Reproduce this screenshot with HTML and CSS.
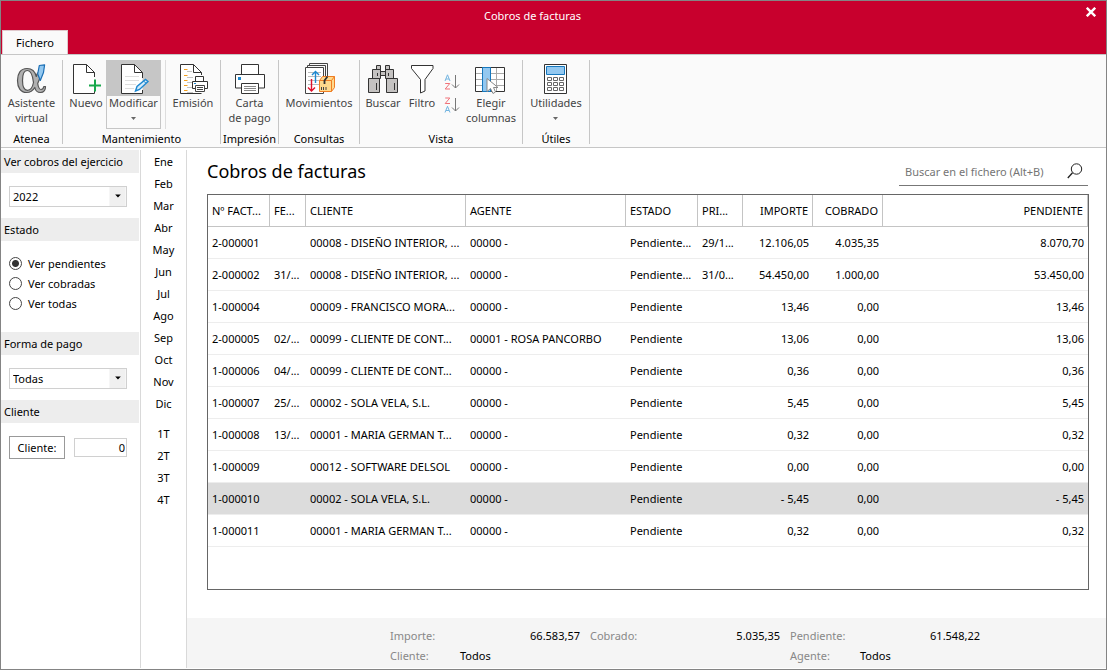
FILE: index.html
```html
<!DOCTYPE html>
<html lang="es">
<head>
<meta charset="utf-8">
<title>Cobros de facturas</title>
<link rel="stylesheet" href="styles.css">
</head>
<body>
<div class="window">
  <header class="titlebar">
    <button class="tab" type="button">Fichero</button>
    <div class="caption">Cobros de facturas</div>
    <button class="close" type="button" aria-label="Cerrar"><svg width="10" height="10" viewBox="0 0 10 10" fill="none" stroke="#fff" stroke-width="2.4"><path d="M.8.8l8.4 8.4M9.2.8L.8 9.2"/></svg></button>
  </header>

  <nav class="ribbon">
    <section class="group">
      <div class="tools">
        <button class="tool" type="button">
          <svg width="32" height="32" viewBox="0 0 32 32" fill="none" stroke-linejoin="round"><path fill-rule="evenodd" d="M11 5.500C4.500 5.500 1.500 10.500 1.500 17.500S4.500 29.500 10.500 29.500C14.500 29.500 17 27.500 18.800 24.500C19.500 28 21.500 29.500 24.500 29.500C27.500 29.500 29.500 27.500 29.500 23.500H27.800C27.500 25.500 26.500 26.500 25 26.500C23 26.500 22.300 24.500 21.700 20.500C23.500 17 24.500 13.500 25 10H21.500L20.300 13.500C19 8 16 5.500 11 5.500ZM11.500 7.500C14.500 7.500 16.500 11.500 17.500 19.500C16.500 24.500 14.500 27.300 11.500 27.300C8 27.300 6.500 23.500 6.500 17.500S8 7.500 11.500 7.500Z" fill="#b0b0b0" stroke="#555" stroke-width="1.200"/><path d="M23.300 2.500L28.600 1.800 27.500 9.500 24.300 17.500 21.700 11z" fill="#93c8f0" stroke="#1c6fb5" stroke-width="1.200"/></svg>
          <span>Asistente<br>virtual</span>
        </button>
      </div>
      <h2 class="group-name">Atenea</h2>
    </section>

    <section class="group">
      <div class="tools">
        <button class="tool tool-new" type="button">
          <svg width="32" height="32" viewBox="0 0 32 32" fill="none"><path d="M24.500 14V9.500L16.500 1.500H3.500v29h21V27" stroke="#333" fill="#fff"/><path d="M16.500 1.500v8h8" stroke="#333"/><path d="M19 22.500h12M25 16.500v12" stroke="#17a84b" stroke-width="2"/></svg>
          <span>Nuevo</span>
        </button>
        <button class="tool tool-active" type="button">
          <svg width="32" height="32" viewBox="0 0 32 32" fill="none"><path d="M24.500 15V9.500l-8-8H3.500v29h21V27" stroke="#333" fill="#fff"/><path d="M16.500 1.500v8h8" stroke="#333"/><path d="M7 13.500h14M7 17.500h14M7 21.500h11M7 25.500h9" stroke="#ddd"/><path d="M17.500 28l1.500-4.500L27.500 16.500l2.500 2-8.500 8z" fill="#d5ecfb" stroke="#1e88d0" stroke-width="1.400"/><path d="M25.500 18l2.500 2.200" stroke="#1e88d0"/></svg>
          <span>Modificar</span>
          <svg class="more" width="5" height="3" viewBox="0 0 5 3"><path d="M0 0h5L2.500 3z" fill="#666"/></svg>
        </button>
        <button class="tool tool-issue" type="button">
          <svg width="32" height="32" viewBox="0 0 32 32" fill="none"><path d="M24.500 12V9.500l-8-8H3.500v29H24.500" stroke="#333" fill="#fff"/><path d="M16.500 1.500v8h8" stroke="#333"/><path d="M7 6.500h3.500M7 12.500h3.500M7 17.500h3.500M7 22.500h3.500M7 27.500h3.500" stroke="#f5a01e" stroke-width="1.200"/><path d="M10 8.500h5M10 14.500h6M10 19.500h5M10 24.500h5M10 29.500h6" stroke="#c4c4c4"/><path d="M18.500 19v-5.500h8V19M15.500 18.500h15v7h-15z" stroke="#333" fill="#fff"/><path d="M18.500 22.500h9v6h-9zM20 24.500h6M20 26.500h6" stroke="#444" fill="#fff"/><path d="M17 20.500h2" stroke="#1e88d0"/></svg>
          <span>Emisión</span>
        </button>
      </div>
      <h2 class="group-name">Mantenimiento</h2>
    </section>

    <section class="group">
      <div class="tools">
        <button class="tool" type="button">
          <svg width="32" height="32" viewBox="0 0 32 32" fill="none" stroke="#333"><path d="M7.500 11V1.500h17V11M7.500 25h-6V11.500h29V25h-6" fill="#fff"/><path d="M7.500 20.500h17v10h-17z" fill="#fff"/><path d="M10 23.500h12M10 25.500h12M10 27.500h12" stroke="#888"/><path d="M4 14h3v3H4z" fill="#1e88d0" stroke="none"/></svg>
          <span>Carta<br>de pago</span>
        </button>
      </div>
      <h2 class="group-name">Impresión</h2>
    </section>

    <section class="group">
      <div class="tools">
        <button class="tool" type="button">
          <svg width="32" height="32" viewBox="0 0 32 32" fill="none"><path d="M6.500 3V.5h18V18M4.500 6V2.500h18V18" stroke="#444"/><path d="M2.500 4.500h18v26h-18z" fill="#fff" stroke="#444"/><path d="M5 9.500h13M5 13.500h13M5 17.500h11M5 21.500h11" stroke="#bbb"/><path d="M12.500 20V8.500M9 12l3.500-3.500L16 12" stroke="#1e88d0" stroke-width="1.400"/><path d="M8.500 16v12M5 24.500L8.500 28l3.500-3.500" stroke="#e1112c" stroke-width="1.400"/><path d="M16.500 17.500l3-4h12v11l-3 4h-12z" fill="#ffd98c" stroke="#ef7d23"/><path d="M16.500 17.500h12v11M28.500 17.500l3-4" stroke="#ef7d23"/><path d="M21.500 21v-3.500l3-4" stroke="#333" stroke-width="1.800"/><path d="M18.500 24v3M20.500 24v3M23 24v3" stroke="#444"/></svg>
          <span>Movimientos</span>
        </button>
      </div>
      <h2 class="group-name">Consultas</h2>
    </section>

    <section class="group">
      <div class="tools tools-view">
        <button class="tool tool-find" type="button">
          <svg width="32" height="32" viewBox="0 0 32 32" fill="#c4c2c1" stroke="#333"><path d="M9.500 2.500h4v4h-4zM18.500 2.500h4v4h-4zM13.500 8.500h5v4h-5zM5.500 6.500h8v9h-8zM18.500 6.500h8v9h-8zM1.500 15.500h11v14h-11zM19.500 15.500h11v14h-11z"/><path d="M10.500 10v3M21.500 10v3M9.500 20v7M27.500 20v7" fill="none"/></svg>
          <span>Buscar</span>
        </button>
        <button class="tool tool-filter" type="button">
          <svg width="32" height="32" viewBox="0 0 32 32" fill="#fff" stroke="#333"><path d="M5.500 2.500h21.500v3l-8 11v11.500l-4.500 2V16.500l-9-11z"/></svg>
          <span>Filtro</span>
        </button>
        <div class="sorts">
          <button class="sort" type="button" aria-label="Orden ascendente"><svg width="16" height="16" viewBox="0 0 16 16" fill="none"><path d="M1 7L3.500.8 6 7M2 5h3" stroke="#72b4e0"/><path d="M1.200 9.500h4.600L1.200 15h4.800" stroke="#f07178"/><path d="M11.500 1v13M8 10.500l3.500 3.500L15 10.500" stroke="#777"/></svg></button>
          <button class="sort" type="button" aria-label="Orden descendente"><svg width="16" height="16" viewBox="0 0 16 16" fill="none"><path d="M1.200 1h4.600L1.200 6.500h4.800" stroke="#f07178"/><path d="M1 15.500l2.500-6.200L6 15.500M2 13.500h3" stroke="#72b4e0"/><path d="M11.500 1v13M8 10.500l3.500 3.500L15 10.500" stroke="#777"/></svg></button>
        </div>
        <button class="tool tool-columns" type="button">
          <svg width="32" height="32" viewBox="0 0 32 32" fill="none"><path d="M.5 4.500h29v24h-29z" fill="#fff" stroke="#333"/><path d="M1 10.500h28M1 16.500h28M1 22.500h28M21.500 5v23" stroke="#aaa"/><path d="M7.500 4.500h8v24h-8z" fill="#93c8f0" stroke="#1678be"/><path d="M12 15.500v13l3.500-3 2.500 5 2.500-1.500-2-4.500h4.500z" fill="#fff" stroke="#888"/></svg>
          <span>Elegir<br>columnas</span>
        </button>
      </div>
      <h2 class="group-name">Vista</h2>
    </section>

    <section class="group">
      <div class="tools">
        <button class="tool" type="button">
          <svg width="32" height="32" viewBox="0 0 32 32" fill="none"><path d="M4.500 1.500h22v29h-22z" fill="#fff" stroke="#333"/><path d="M6.500 3.500h18v8h-18z" fill="#93c8f0" stroke="#1678be"/><path d="M7.500 14.500h4v3h-4zM13.500 14.500h4v3h-4zM19.500 14.500h4v3h-4zM7.500 19.500h4v3h-4zM13.500 19.500h4v3h-4zM19.500 19.500h4v3h-4zM7.500 24.500h4v3h-4zM13.500 24.500h4v3h-4zM19.500 24.500h4v3h-4z" stroke="#666"/></svg>
          <span>Utilidades</span>
          <svg class="more" width="5" height="3" viewBox="0 0 5 3"><path d="M0 0h5L2.500 3z" fill="#666"/></svg>
        </button>
      </div>
      <h2 class="group-name">Útiles</h2>
    </section>
  </nav>

  <div class="body">
    <aside class="filters">
      <h3><label for="year">Ver cobros del ejercicio</label></h3>
      <div class="panel">
        <div class="combo"><select id="year"><option>2022</option></select><svg width="17" height="20" viewBox="0 0 17 20"><path d="M0 0h17v20H0z" fill="#f0f0f0"/><path d="M6 8h6L9 11z"/></svg></div>
      </div>
      <h3>Estado</h3>
      <div class="panel radios">
        <label><input type="radio" name="state" checked>Ver pendientes</label>
        <label><input type="radio" name="state">Ver cobradas</label>
        <label><input type="radio" name="state">Ver todas</label>
      </div>
      <h3><label for="method">Forma de pago</label></h3>
      <div class="panel">
        <div class="combo"><select id="method"><option>Todas</option></select><svg width="17" height="20" viewBox="0 0 17 20"><path d="M0 0h17v20H0z" fill="#f0f0f0"/><path d="M6 8h6L9 11z"/></svg></div>
      </div>
      <h3>Cliente</h3>
      <div class="panel client">
        <button type="button">Cliente:</button>
        <input type="text" value="0" aria-label="Cliente">
      </div>
    </aside>

    <nav class="periods">
      <button type="button">Ene</button><button type="button">Feb</button><button type="button">Mar</button><button type="button">Abr</button><button type="button">May</button><button type="button">Jun</button><button type="button">Jul</button><button type="button">Ago</button><button type="button">Sep</button><button type="button">Oct</button><button type="button">Nov</button><button type="button">Dic</button>
      <button class="quarter" type="button">1T</button><button type="button">2T</button><button type="button">3T</button><button type="button">4T</button>
    </nav>

    <main class="content">
      <div class="heading">
        <h1>Cobros de facturas</h1>
        <div class="search">
          <input type="text" placeholder="Buscar en el fichero (Alt+B)" aria-label="Buscar en el fichero">
          <svg width="16" height="16" viewBox="0 0 16 16" fill="none" stroke="#222"><circle cx="9.500" cy="6" r="5.200"/><path d="M5.500 9.800L.8 15" stroke-width="1.300"/></svg>
        </div>
      </div>
      <div class="grid">
        <table>
          <colgroup><col class="c-number"><col class="c-date"><col class="c-name"><col class="c-name"><col class="c-state"><col class="c-first"><col class="c-sum"><col class="c-sum"><col></colgroup>
          <thead><tr><th>Nº FACT...</th><th>FE...</th><th>CLIENTE</th><th>AGENTE</th><th>ESTADO</th><th>PRI...</th><th class="num">IMPORTE</th><th class="num">COBRADO</th><th class="num">PENDIENTE</th></tr></thead>
          <tbody>
            <tr><td>2-000001</td><td></td><td>00008 - DISEÑO INTERIOR, ...</td><td>00000 -</td><td>Pendiente...</td><td>29/1...</td><td class="num">12.106,05</td><td class="num">4.035,35</td><td class="num">8.070,70</td></tr>
            <tr><td>2-000002</td><td>31/...</td><td>00008 - DISEÑO INTERIOR, ...</td><td>00000 -</td><td>Pendiente...</td><td>31/0...</td><td class="num">54.450,00</td><td class="num">1.000,00</td><td class="num">53.450,00</td></tr>
            <tr><td>1-000004</td><td></td><td>00009 - FRANCISCO MORA...</td><td>00000 -</td><td>Pendiente</td><td></td><td class="num">13,46</td><td class="num">0,00</td><td class="num">13,46</td></tr>
            <tr><td>2-000005</td><td>02/...</td><td>00099 - CLIENTE DE CONT...</td><td>00001 - ROSA PANCORBO</td><td>Pendiente</td><td></td><td class="num">13,06</td><td class="num">0,00</td><td class="num">13,06</td></tr>
            <tr><td>1-000006</td><td>04/...</td><td>00099 - CLIENTE DE CONT...</td><td>00000 -</td><td>Pendiente</td><td></td><td class="num">0,36</td><td class="num">0,00</td><td class="num">0,36</td></tr>
            <tr><td>1-000007</td><td>25/...</td><td>00002 - SOLA VELA, S.L.</td><td>00000 -</td><td>Pendiente</td><td></td><td class="num">5,45</td><td class="num">0,00</td><td class="num">5,45</td></tr>
            <tr><td>1-000008</td><td>13/...</td><td>00001 - MARIA GERMAN T...</td><td>00000 -</td><td>Pendiente</td><td></td><td class="num">0,32</td><td class="num">0,00</td><td class="num">0,32</td></tr>
            <tr><td>1-000009</td><td></td><td>00012 - SOFTWARE DELSOL</td><td>00000 -</td><td>Pendiente</td><td></td><td class="num">0,00</td><td class="num">0,00</td><td class="num">0,00</td></tr>
            <tr class="selected"><td>1-000010</td><td></td><td>00002 - SOLA VELA, S.L.</td><td>00000 -</td><td>Pendiente</td><td></td><td class="num">- 5,45</td><td class="num">0,00</td><td class="num">- 5,45</td></tr>
            <tr><td>1-000011</td><td></td><td>00001 - MARIA GERMAN T...</td><td>00000 -</td><td>Pendiente</td><td></td><td class="num">0,32</td><td class="num">0,00</td><td class="num">0,32</td></tr>
          </tbody>
        </table>
      </div>
      <footer class="totals">
        <div class="total"><span class="name">Importe:</span><span class="amount">66.583,57</span></div>
        <div class="total"><span class="name">Cobrado:</span><span class="amount">5.035,35</span></div>
        <div class="total"><span class="name">Pendiente:</span><span class="amount">61.548,22</span></div>
        <div class="total"><span class="name">Cliente:</span><span>Todos</span></div>
        <div class="total total-agent"><span class="name">Agente:</span><span>Todos</span></div>
      </footer>
    </main>
  </div>
</div>
</body>
</html>
```
FILE: styles.css
```css
* { box-sizing: border-box; }
body { margin: 0; font: 11px/15px "Noto Sans", "Open Sans", sans-serif; color: #000; }
button, input, select { font: inherit; color: inherit; }
button { margin: 0; padding: 0; border: 0; background: none; }
h1, h2, h3 { margin: 0; font-weight: 400; }

.window { display: flex; flex-direction: column; min-height: 100vh; border: 1px solid #848484; background: #fff; }

.titlebar { display: grid; grid-template-columns: 68px 1fr 30px; height: 53px; background: #c8002d; }
.tab { align-self: end; height: 24px; margin: 0 1px; border: 1px solid #e0c8cc; border-bottom: 0; background: #fafafa; font-size: 11px; }
.caption { margin-right: 80px; padding-top: 7px; text-align: center; color: #fff; }
.close { align-self: start; height: 22px; }
.close svg { display: block; margin: 6px auto; }

.ribbon { display: grid; grid-template-columns: 62px 158px 58px 81px 163px 67px; height: 94px; padding: 5px 0 3px; border-top: 1px solid #c6c6c6; border-bottom: 1px solid #c6c6c6; background: #fafafa; }
.group { display: flex; flex-direction: column; justify-content: space-between; border-right: 1px solid #c6c6c6; min-width: 0; }
.group-name { font-size: 11px; line-height: 11px; text-align: center; white-space: nowrap; }
.tools { display: flex; justify-content: center; }
.tools-view { justify-content: flex-start; }
.tool { display: flex; flex-direction: column; align-items: center; height: 69px; padding-top: 3px; color: #444; white-space: nowrap; }
.tool svg { display: block; flex: none; }
.tool .more { margin-top: 7px; }
.tool-new { width: 43px; padding-left: 3px; }
.tool-active { width: 55px; border: 1px solid #c6c6c6; padding-top: 2px; background: linear-gradient(#c6c6c6 35px, #fafafa 35px); }
.tool-issue { width: 55px; margin-left: 4px; border-left: 1px solid #ddd; }
.tool-find { width: 46px; }
.tool-filter { width: 32px; }
.sorts { display: flex; flex-direction: column; gap: 7px; width: 28px; padding-top: 14px; align-items: center; }
.sort, .sort svg { display: block; width: 16px; height: 16px; }
.tool-columns { width: 50px; }

.body { flex: 1; display: grid; grid-template-columns: 139px 47px 1fr; padding: 2px 0 1px; }
.filters { padding-right: 1px; }
.filters h3 { height: 23px; padding: 4px 3px; background: #ededed; font-size: 11px; }
.panel { padding: 13px 12px 11px 8px; }
.combo { display: grid; align-items: center; border: 1px solid #d0d0d0; height: 21px; }
.combo select { grid-area: 1 / 1; width: 100%; height: 19px; appearance: none; border: 0; padding: 0 3px; background: #fff; }
.combo svg { grid-area: 1 / 1; justify-self: end; height: 19px; pointer-events: none; }
.radios { display: flex; flex-direction: column; padding: 12px 8px 19px; }
.radios label { display: flex; align-items: center; gap: 6px; height: 20px; }
.radios input { appearance: none; width: 13px; height: 13px; margin: 0; border: 1px solid #444; border-radius: 50%; background: #fff; }
.radios input:checked { background: radial-gradient(circle, #333 3px, #fff 4px); }
.client { display: flex; align-items: center; justify-content: space-between; }
.client button { width: 56px; height: 23px; border: 1px solid #999; }
.client input { width: 53px; height: 19px; padding: 0 1px; border: 1px solid #d0d0d0; text-align: right; }

.periods { display: flex; flex-direction: column; border: 1px solid #d9d9d9; border-width: 0 1px; }
.periods button { height: 22px; }
.periods .quarter { margin-top: 8px; }

.content { display: flex; flex-direction: column; min-width: 0; }
.heading { display: flex; justify-content: space-between; padding: 7px 18px 8px 20px; }
h1 { font-size: 18px; line-height: 29px; }
.search { display: flex; align-items: center; width: 189px; border-bottom: 1px solid #777; }
.search input { flex: 1; min-width: 0; border: 0; padding: 0 0 0 6px; outline: 0; }
.search input::placeholder { color: #757575; opacity: 1; }
.search svg { margin-right: 5px; }

.grid { flex: 1; margin: 0 17px 28px 20px; border: 1px solid #666; }
table { width: 100%; table-layout: fixed; border-collapse: separate; border-spacing: 0; }
.c-number { width: 62px; }
.c-date { width: 36px; }
.c-name { width: 160px; }
.c-state { width: 72px; }
.c-first { width: 45px; }
.c-sum { width: 70px; }
th, td { height: 32px; padding: 0 4px; overflow: hidden; white-space: nowrap; text-align: left; font-weight: 400; border-bottom: 1px solid #ededed; }
th { border-right: 1px solid #c4c4c4; border-bottom-color: #c4c4c4; }
.num { text-align: right; }
.selected td { background: #dcdcdc; }

.totals { display: grid; grid-template-columns: repeat(3, 190px); grid-auto-rows: 20px; gap: 0 10px; height: 50px; padding: 8px 0 0 203px; background: #f5f5f5; line-height: 19px; }
.total { display: flex; }
.name { width: 70px; color: #888; }
.amount { margin-left: auto; }
.total-agent { grid-column: 3; }
```
